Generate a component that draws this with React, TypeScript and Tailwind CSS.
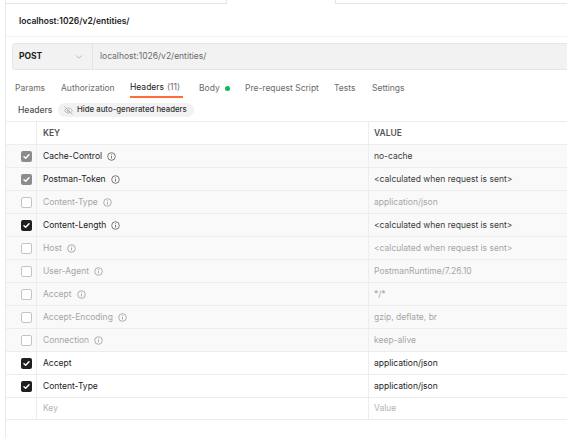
import { EyeOff, ChevronDown } from 'lucide-react';

type Row = {
  key: string;
  value: string;
  state: 'auto-on' | 'off' | 'on';
  auto: boolean;
};

const ROWS: Row[] = [
  { key: 'Cache-Control', value: 'no-cache', state: 'auto-on', auto: true },
  { key: 'Postman-Token', value: '<calculated when request is sent>', state: 'auto-on', auto: true },
  { key: 'Content-Type', value: 'application/json', state: 'off', auto: true },
  { key: 'Content-Length', value: '<calculated when request is sent>', state: 'on', auto: true },
  { key: 'Host', value: '<calculated when request is sent>', state: 'off', auto: true },
  { key: 'User-Agent', value: 'PostmanRuntime/7.26.10', state: 'off', auto: true },
  { key: 'Accept', value: '*/*', state: 'off', auto: true },
  { key: 'Accept-Encoding', value: 'gzip, deflate, br', state: 'off', auto: true },
  { key: 'Connection', value: 'keep-alive', state: 'off', auto: true },
  { key: 'Accept', value: 'application/json', state: 'on', auto: false },
  { key: 'Content-Type', value: 'application/json', state: 'on', auto: false },
];

function Check({ color }: { color: string }) {
  return (
    <svg width="11" height="11" viewBox="0 0 11 11">
      <rect width="11" height="11" rx="2" fill={color} />
      <path d="M3 5.7 L4.7 7.3 L8 3.8" stroke="#fff" strokeWidth="1.5" fill="none" strokeLinecap="round" strokeLinejoin="round" />
    </svg>
  );
}

function Checkbox({ state }: { state: Row['state'] }) {
  if (state === 'auto-on') return <Check color="#8c8c8c" />;
  if (state === 'on') return <Check color="#1f1f1f" />;
  return <div className="w-[11px] h-[11px] rounded-[2px] border border-[#c4c4c4] bg-white" />;
}

function Info({ color }: { color: string }) {
  return (
    <svg width="9" height="9" viewBox="0 0 9 9" className="ml-[5px]">
      <circle cx="4.5" cy="4.5" r="3.8" stroke={color} strokeWidth="0.9" fill="none" />
      <path d="M4.5 4 V6.5" stroke={color} strokeWidth="0.9" />
      <circle cx="4.5" cy="2.7" r="0.55" fill={color} />
    </svg>
  );
}

export default function App() {
  return (
    <div
      className="w-[567px] h-[438px] overflow-hidden bg-white flex text-[8.5px]"
      style={{ fontFamily: 'Inter, "Noto Sans", sans-serif' }}
    >
      <div className="w-[6px] shrink-0 border-r border-[#ebebeb]" />
      <div className="flex-1 flex flex-col min-w-0">
        {/* top strip */}
        <div className="h-[4px] flex shrink-0">
          <div className="w-[221px] border-r border-b border-[#e6e6e6]" />
          <div className="w-[108px]" />
          <div className="flex-1 border-l border-b border-[#e6e6e6]" />
        </div>

        {/* title */}
        <div className="h-[33px] flex items-center pl-[13px] pt-[2px] border-b border-[#f2f2f2] shrink-0">
          <span className="font-semibold text-[#212121]">localhost:1026/v2/entities/</span>
        </div>

        {/* url bar */}
        <div className="mt-[6px] ml-[6px] -mr-[2px] h-[27px] flex bg-[#f2f2f2] border border-[#e6e6e6] rounded-l-[3px] shrink-0">
          <div className="w-[80px] flex items-center justify-between pl-[6px] pr-[8px] border-r border-[#e3e3e3]">
            <span className="font-bold text-[#212121]">POST</span>
            <ChevronDown size={10} color="#9a9a9a" strokeWidth={1.5} />
          </div>
          <div className="flex items-center pl-[7px] text-[#6b6b6b]">localhost:1026/v2/entities/</div>
        </div>

        {/* tabs */}
        <div className="mt-[8px] h-[20px] flex items-stretch pl-[9px] text-[#6b6b6b] shrink-0">
          <div className="w-[46px] flex items-center">Params</div>
          <div className="w-[69px] flex items-center">Authorization</div>
          <div className="w-[69px] flex">
            <span className="flex items-center border-b-2 border-[#ff6c37] text-[#212121] pr-[3px]">
              Headers <span className="ml-[3px] text-[#6b6b6b]">(11)</span>
            </span>
          </div>
          <div className="w-[46px] flex items-center">
            Body
            <span className="ml-[5px] w-[5px] h-[5px] rounded-full bg-[#0cbb52]" />
          </div>
          <div className="w-[89px] flex items-center">Pre-request Script</div>
          <div className="w-[38px] flex items-center">Tests</div>
          <div className="flex items-center">Settings</div>
        </div>

        {/* headers toggle row */}
        <div className="h-[23px] flex items-center pl-[12px] pt-[1px] shrink-0">
          <span className="font-medium text-[#505050] w-[40px]">Headers</span>
          <span className="h-[14px] flex items-center gap-[4px] pl-[6px] pr-[7px] rounded-full bg-[#f2f2f2] text-[7.8px] font-medium text-[#333]">
            <EyeOff size={9} color="#9a9a9a" strokeWidth={1.8} />
            Hide auto-generated headers
          </span>
        </div>

        {/* table */}
        <div className="border-t border-[#ededed] -mr-[2px]">
          <div className="grid grid-cols-[31px_332px_1fr] h-[23px] border-b border-[#ededed]">
            <div className="border-r border-[#ededed]" />
            <div className="flex items-center pl-[6px] border-r border-[#ededed] font-semibold text-[#555]">KEY</div>
            <div className="flex items-center pl-[5px] font-semibold text-[#555]">VALUE</div>
          </div>
          {ROWS.map((r, i) => {
            const off = r.state === 'off';
            const keyColor = off ? 'text-[#a6a6a6]' : 'text-[#212121]';
            const valColor = off ? 'text-[#a6a6a6]' : r.auto ? 'text-[#3a3a3a]' : 'text-[#212121]';
            return (
              <div
                key={i}
                className={`grid grid-cols-[31px_332px_1fr] h-[23px] border-b border-[#ededed] ${r.auto ? 'bg-[#f9f9f9]' : 'bg-white'}`}
              >
                <div className="flex items-center pl-[15px] border-r border-[#ededed]">
                  <Checkbox state={r.state} />
                </div>
                <div className={`flex items-center pl-[6px] border-r border-[#ededed] ${keyColor}`}>
                  {r.key}
                  {r.auto && <Info color={off ? '#a6a6a6' : '#6b6b6b'} />}
                </div>
                <div className={`flex items-center pl-[5px] ${valColor}`}>{r.value}</div>
              </div>
            );
          })}
          <div className="grid grid-cols-[31px_332px_1fr] h-[22px] border-b border-[#ededed] bg-white">
            <div className="border-r border-[#ededed]" />
            <div className="flex items-center pl-[6px] border-r border-[#ededed] text-[#b3b3b3]">Key</div>
            <div className="flex items-center pl-[5px] text-[#b3b3b3]">Value</div>
          </div>
        </div>
      </div>
    </div>
  );
}
